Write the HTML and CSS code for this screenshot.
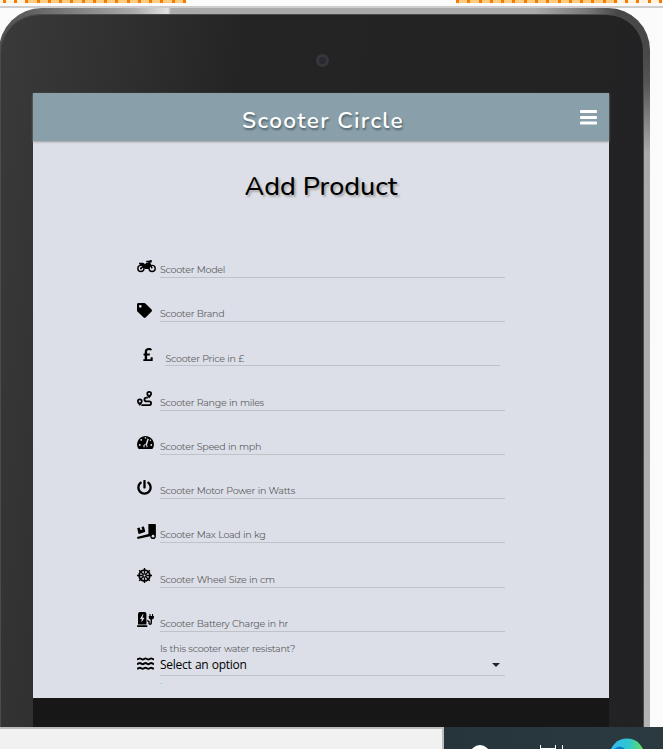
FILE: index.html
```html
<!DOCTYPE html>
<html lang="en">
<head>
<meta charset="utf-8">
<title>Scooter Circle</title>
<link rel="stylesheet" href="styles.css">
</head>
<body>
<div class="ruler"><i class="range range-left"></i><i class="range range-right"></i></div>
<div class="stage">
  <div class="tablet"><div class="bezel">
    <div class="camera"></div>
    <main class="screen">
      <header class="navbar">
        <h1>Scooter Circle</h1>
        <svg class="menu" viewBox="0 0 17 15"><path d="M1 0h15a1 1 0 0 1 1 1v1a1 1 0 0 1-1 1H1a1 1 0 0 1-1-1V1a1 1 0 0 1 1-1zM1 6h15a1 1 0 0 1 1 1v1a1 1 0 0 1-1 1H1a1 1 0 0 1-1-1V7a1 1 0 0 1 1-1zM1 11.500h15a1 1 0 0 1 1 1v1a1 1 0 0 1-1 1H1a1 1 0 0 1-1-1v-1a1 1 0 0 1 1-1z"/></svg>
      </header>
      <h2>Add Product</h2>
      <form>
        <div class="row"><svg class="icon" viewBox="0 0 640 512" style="width:19px"><g fill="none" stroke="#000" stroke-width="48"><circle cx="128" cy="320" r="104"/><circle cx="512" cy="320" r="104"/><path d="M512 320L400 80h-90M128 320l100-80"/></g><path d="M64 130h110c50 0 70 25 90 45l64-55h90l50 100c-45 30-60 75-62 120H250c-4-70-50-120-120-128l-60-30zM385 72l80-40h34v90H405z"/><circle cx="128" cy="320" r="34"/></svg><label class="field">Scooter Model</label></div>
        <div class="row"><svg class="icon" viewBox="0 0 512 512" style="width:15px"><path d="M0 252V48C0 21 21 0 48 0h204a48 48 0 0 1 34 14l212 212c19 19 19 49 0 68L294 498c-19 19-49 19-68 0L14 286A48 48 0 0 1 0 252zM112 64a48 48 0 1 0 0 96 48 48 0 0 0 0-96z"/></svg><label class="field">Scooter Brand</label></div>
        <div class="row price"><svg class="icon" viewBox="0 0 320 512" style="width:10px"><path d="M308 352h-45c-7 0-12 5-12 12v51H128V288h84c7 0 12-5 12-12v-40c0-7-5-12-12-12h-84v-64c0-32 25-57 62-57 24 0 46 12 58 19 5 3 12 2 15-3l29-35c4-5 3-13-2-17-17-13-54-35-102-35C106 32 48 85 48 158v66H20c-7 0-12 5-12 12v40c0 7 5 12 12 12h28v128H12c-7 0-12 5-12 12v40c0 7 5 12 12 12h296c7 0 12-5 12-12V364c0-7-5-12-12-12z"/></svg><label class="field">Scooter Price in £</label></div>
        <div class="row"><svg class="icon" viewBox="0 0 512 512" style="width:15px"><path fill-rule="evenodd" d="M416 0a96 96 0 0 1 96 96c0 53-96 160-96 160S320 149 320 96a96 96 0 0 1 96-96zm0 58a38 38 0 1 0 0 76 38 38 0 0 0 0-76zM96 256a96 96 0 0 1 96 96c0 53-96 160-96 160S0 405 0 352a96 96 0 0 1 96-96zm0 58a38 38 0 1 0 0 76 38 38 0 0 0 0-76z"/><path d="M372 224h-52a64 64 0 0 0 0 128h96a64 64 0 0 1 0 128H150" fill="none" stroke="#000" stroke-width="64"/></svg><label class="field">Scooter Range in miles</label></div>
        <div class="row"><svg class="icon" viewBox="0 0 576 512" style="width:17px"><path d="M288 32C129 32 0 161 0 320c0 53 14 102 39 145 6 9 16 15 28 15h442c12 0 22-6 28-15 25-43 39-92 39-145C576 161 447 32 288 32z"/><g fill="#dcdfe7"><circle cx="288" cy="100" r="28"/><circle cx="142" cy="165" r="32"/><circle cx="92" cy="340" r="32"/><circle cx="485" cy="340" r="32"/><circle cx="455" cy="180" r="25"/><path d="M355 122l46 16-62 204c22 22 22 52 13 74H224c-28-52 6-100 64-96z"/></g><path d="M254 372a34 34 0 1 1 68 0v60h-68z"/></svg><label class="field">Scooter Speed in mph</label></div>
        <div class="row"><svg class="icon" viewBox="0 0 512 512" style="width:15px"><path d="M400 54c63 45 104 119 104 202 0 137-111 248-248 248C120 504 8 393 8 256 8 173 49 99 112 54c12-8 28-5 35 8l16 28c6 11 3 24-7 31-41 31-68 80-68 135 0 92 75 168 168 168 92 0 169-74 168-169 0-52-25-102-68-134-10-7-12-21-7-31l16-28c7-12 23-16 35-8zM296 264V24c0-13-11-24-24-24h-32c-13 0-24 11-24 24v240c0 13 11 24 24 24h32c13 0 24-11 24-24z"/></svg><label class="field">Scooter Motor Power in Watts</label></div>
        <div class="row"><svg class="icon" viewBox="0 0 640 512" style="width:19px"><path d="M384 0h224a32 32 0 0 1 32 32v384a96 96 0 0 1-192 0L12 512l-16-66 388-104zM18 140l70-19 24 88 60-16-24-88 65-17c12-3 21 2 24 12l40 150c3 12-2 21-12 24L68 338c-12 3-21-2-24-12L6 164c-3-12 2-21 12-24z"/><circle cx="544" cy="416" r="46" fill="#dcdfe7"/></svg><label class="field">Scooter Max Load in kg</label></div>
        <div class="row"><svg class="icon" viewBox="0 0 512 512" style="width:15px"><g fill="none" stroke="#000"><circle cx="256" cy="256" r="184" stroke-width="60"/><path d="M256 0v190M256 322v190M0 256h190M322 256h190M75 75l135 135M302 302l135 135M437 75L302 210M210 302L75 437" stroke-width="46"/><circle cx="256" cy="256" r="54" stroke-width="42"/></g></svg><label class="field">Scooter Wheel Size in cm</label></div>
        <div class="row"><svg class="icon" viewBox="0 0 576 512" style="width:17px"><path fill-rule="evenodd" d="M320 430V64a64 64 0 0 0-64-64H96a64 64 0 0 0-64 64v366zM16 448h320a16 16 0 0 1 16 16v32a16 16 0 0 1-16 16H16a16 16 0 0 1-16-16v-32a16 16 0 0 1 16-16zM196 76L100 240h62l-16 122 108-166h-70l36-120z"/><path d="M424 64h36v70h50V64h36v70h30v42c0 45-27 72-68 79v121c0 85-124 85-124 0v-34c0-12-5-22-18-22h-30v-42h32c42 0 64 24 64 64v34c0 24 28 24 28 0V255c-38-10-62-38-62-79v-42h26z"/></svg><label class="field">Scooter Battery Charge in hr</label></div>
        <div class="row"><svg class="icon" viewBox="0 0 576 512" style="width:17px"><path d="M0 112c60 0 60-32 96-32s60 40 96 40 60-40 96-40 60 40 96 40 60-40 96-40 36 32 96 32M0 272c60 0 60-32 96-32s60 40 96 40 60-40 96-40 60 40 96 40 60-40 96-40 36 32 96 32M0 432c60 0 60-32 96-32s60 40 96 40 60-40 96-40 60 40 96 40 60-40 96-40 36 32 96 32" fill="none" stroke="#000" stroke-width="66"/></svg>
          <div class="field select"><label>Is this scooter water resistant?</label><span class="choice">Select an option<b class="caret"></b></span></div></div>
        <div class="helper">.</div>
      </form>
    </main>
  </div></div>
</div>
<footer class="taskbar">
  <div class="search"></div>
  <div class="apps">
    <svg viewBox="0 0 219 22"><circle cx="36" cy="28" r="8" fill="#888" stroke="#fff" stroke-width="4"/><path d="M96.500 18v6M111.500 18v6M97 21.500h14M118.500 18v6" fill="none" stroke="#fff"/><defs><linearGradient id="edge"><stop stop-color="#35b8f4"/><stop offset=".55" stop-color="#2fc6d0"/><stop offset="1" stop-color="#69df4d"/></linearGradient></defs><circle cx="183" cy="29" r="17.500" fill="url(#edge)"/><path d="M170 22q6-5 11 0z" fill="#087cc1"/></svg>
  </div>
</footer>
</body>
</html>
```
FILE: styles.css
```css
* { box-sizing: border-box; }
body { margin: 0; width: 663px; height: 749px; overflow: hidden; background: #fbfbfb; display: flex; flex-direction: column; font-family: "Liberation Sans", sans-serif; }
.ruler { height: 8px; flex: none; display: flex; justify-content: space-between; border-bottom: 2px solid #cdcdcd; }
.range { height: 3px; }
.range-left { width: 186px; background: repeating-linear-gradient(90deg, #f57c00 0 3px, transparent 3px 11.25px) 3px 0 / 183px 3px no-repeat, linear-gradient(90deg, #fff3e0 26px, #ffcc80 26px); }
.range-right { width: 207px; background: repeating-linear-gradient(90deg, #f57c00 0 3px, transparent 3px 11.28px), linear-gradient(90deg, #ffcc80 161px, #fff3e0 161px); }
.stage { height: 719px; overflow: hidden; flex: none; }
.tablet { width: 651px; height: 850px; margin-left: -1px; padding: 7px 7px 0 2px; border-radius: 43px 42px 0 0; background: linear-gradient(90deg, #505050 0, #606060 30px, #aaa 135px, #e2e2e2 169px, #aaa 172px, #aaa 535px, #777 590px, #444 620px, transparent 621px), linear-gradient(180deg, #484848 45px, #555 75px, #aaa 145px, #b5b5b5); }
.bezel { height: 840px; border-radius: 38px 36px 0 0; background: linear-gradient(97deg, #3a3a3a, #303030 120px, #242424 245px, #222224); padding: 78px 0 0 32px; position: relative; box-shadow: 0 0 0 1px #4b4b4b; }
.camera { position: absolute; left: 315px; top: 39px; width: 13px; height: 13px; border: 3px solid #37363d; border-radius: 50%; background: #2a2931; }
.screen { width: 576px; height: 605px; background: #dcdfe7; }
.navbar { height: 48px; background: #899fa9; box-shadow: 0 1px 2px #999; position: relative; }
h1, h2 { margin: 0; text-align: center; font-family: Nunito, "Open Sans", sans-serif; }
h1 { color: #fff; font-size: 22.6px; line-height: 55px; font-weight: 600; letter-spacing: 1.35px; text-shadow: 1px 2px 2px #50636c; padding-left: 4px; }
.menu { position: absolute; right: 12.5px; top: 17px; width: 17px; height: 15px; fill: #fff; }
h2 { margin-top: 26px; font-size: 26.9px; line-height: 38px; font-weight: 500; color: #000; text-shadow: 2px 2px 2px #aaa; }
form { width: 368px; margin: 28.8px 0 0 104px; }
.row { height: 44.22px; display: flex; align-items: flex-end; }
.icon { height: 15px; margin-bottom: 4.5px; flex: none; overflow: visible; }
.field { margin-left: auto; width: 345.500px; height: 20px; border-bottom: 1px solid #bfc2c7; padding-left: .5px; font: 400 9.5px/24px Montserrat, Inter, sans-serif; letter-spacing: -.3px; word-spacing: .4px; color: #606165; white-space: nowrap; }
.price { padding: 0 5px 0 6px; }
.price .field { width: 335px; line-height: 25px; }
.select { height: 38px; line-height: 22px; display: flex; flex-direction: column; }
.select label { height: 17px; }
.choice { height: 20px; display: flex; align-items: center; justify-content: space-between; font: 12px/20px "Segoe UI", "Open Sans", sans-serif; letter-spacing: -.25px; color: #000; }
.caret { border: 4px solid transparent; border-top-color: #222; border-bottom: 0; margin-right: 5px; }
.helper { margin-left: 23px; height: 11px; font-size: 9px; line-height: 10px; color: #4dd39b; }
.bezel::after { content: ""; display: block; width: 576px; height: 60px; background: #171717; }
.taskbar { height: 22px; display: flex; background: #26353b; }
.search { width: 444px; background: #f1f1f1; border-top: 2px solid #bdbdbd; border-right: 2px solid #bdbdbd; }
.apps { width: 219px; background: linear-gradient(90deg, #26353b, #2b3a40); }
.apps svg { display: block; width: 219px; height: 22px; }
```
